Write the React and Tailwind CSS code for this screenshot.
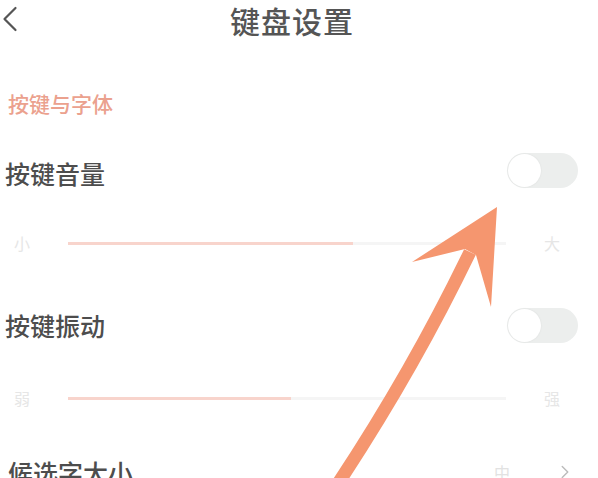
import { ChevronLeft, ChevronRight } from 'lucide-react'

const font = { fontFamily: '"Noto Sans CJK SC", "Noto Sans", sans-serif' }

function Toggle() {
  return (
    <div className="w-[71px] h-[35px] rounded-full bg-[#eceeed] flex items-center px-[1px]">
      <div className="w-[33px] h-[33px] rounded-full bg-white shadow-[0_0_2px_rgba(0,0,0,0.08)]" />
    </div>
  )
}

function SliderRow({ left, right, fill }) {
  return (
    <div className="h-full flex items-center pl-[14px] pr-[38px]">
      <span className="text-[16px] leading-none text-[#e6e6e6] w-[54px]">{left}</span>
      <div className="flex-1 h-[3px] bg-[#f5f5f5] flex mr-[38px]">
        <div className="h-full bg-[#f8d4cc]" style={{ width: fill }} />
      </div>
      <span className="text-[16px] leading-none text-[#e6e6e6]">{right}</span>
    </div>
  )
}

export default function App() {
  return (
    <div className="relative w-[598px] h-[478px] overflow-hidden bg-white" style={font}>
      {/* Header */}
      <div className="relative h-[40px] flex items-center justify-center pr-[14px]">
        <ChevronLeft size={44} strokeWidth={1.2} className="absolute left-[-12px] top-[-3px] text-[#555]" />
        <span className="text-[30px] leading-none font-medium text-[#555] tracking-[1px]">键盘设置</span>
      </div>

      {/* Section label */}
      <div className="h-[108px] pt-[52px] pl-[8px]">
        <span className="text-[21px] leading-[22px] font-medium text-[#eba18e]">按键与字体</span>
      </div>

      {/* Key volume */}
      <div className="h-[50px] flex items-center justify-between pl-[5px] pr-[20px]">
        <span className="text-[25px] leading-none font-medium text-[#4d4d4d]">按键音量</span>
        <div className="-mt-[6px]"><Toggle /></div>
      </div>
      <div className="h-[90px]">
        <SliderRow left="小" right="大" fill="65%" />
      </div>

      {/* Key vibration */}
      <div className="h-[74px] flex items-center justify-between pl-[5px] pr-[20px]">
        <span className="text-[25px] leading-none font-medium text-[#4d4d4d]">按键振动</span>
        <Toggle />
      </div>
      <div className="h-[72px]">
        <SliderRow left="弱" right="强" fill="51%" />
      </div>

      {/* Candidate font size */}
      <div className="h-[76px] flex items-center justify-between pl-[8px] pr-[22px]">
        <span className="text-[25px] leading-none font-medium text-[#4d4d4d]">候选字大小</span>
        <div className="flex items-center gap-[44px]">
          <span className="text-[16px] text-[#e2e2e2]">中</span>
          <ChevronRight size={22} strokeWidth={1.5} className="text-[#bbb]" />
        </div>
      </div>

      {/* Annotation arrow */}
      <svg className="absolute inset-0 pointer-events-none" width="598" height="478" viewBox="0 0 598 478">
        <path d="M470 252 Q413 370 339 482" fill="none" stroke="#f5966f" strokeWidth="13" />
        <polygon points="497,207 412,262 465,249 476,255 491,307" fill="#f5966f" />
      </svg>
    </div>
  )
}
